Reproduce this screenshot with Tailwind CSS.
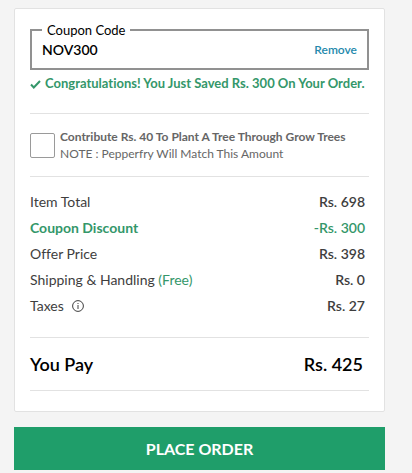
<!DOCTYPE html>
<html lang="en">
<head>
    <meta charset="UTF-8">
    <meta name="viewport" content="width=device-width, initial-scale=1.0">
    <title>Order Summary</title>
    <script src="https://cdn.jsdelivr.net/npm/@tailwindcss/browser@4"></script>
</head>
<body class="bg-[#f4f4f4] font-['Lato',sans-serif] text-[#3e3e3e] [font-variant-ligatures:none]">

    <main class="pl-[14px] pr-[27px] pt-2 pb-[3px]">
        <section class="bg-white border border-[#e2e2e2] rounded-xs px-[15px] pt-[11px] pb-5">
            <!-- Coupon -->
            <fieldset class="border-2 border-[#919191] px-[10px] pb-2">
                <legend class="px-[5px] text-[13px] leading-5 text-black"><label for="coupon">Coupon Code</label></legend>
                <div class="flex items-center justify-between h-5">
                    <input id="coupon" type="text" value="NOV300" class="min-w-0 flex-1 h-5 text-sm font-semibold text-black outline-none">
                    <button type="button" class="text-xs font-semibold text-[#2489ac]">Remove</button>
                </div>
            </fieldset>
            <p class="flex items-center gap-1 mt-1 h-5 text-[13px] font-bold whitespace-nowrap text-[#34976a]">
                <svg class="w-[11px] h-[11px] shrink-0" viewBox="0 0 11 11" fill="none" stroke="currentColor" stroke-width="2"><path d="M1 5.5 3.8 8.5 10 2"/></svg>
                Congratulations! You Just Saved Rs. 300 On Your Order.
            </p>

            <!-- Donation -->
            <div class="flex items-center gap-[5px] mt-[19px] h-16 border-y border-[#e2e2e2]">
                <input id="donate" type="checkbox" class="appearance-none size-[25px] shrink-0 border border-[#9a9a9a] rounded-xs bg-white checked:bg-[#1f9e6a]">
                <label for="donate" class="text-xs leading-[17px] whitespace-nowrap text-[#666666]">
                    <span class="block font-bold">Contribute Rs. 40 To Plant A Tree Through Grow Trees</span>
                    <span class="block">NOTE : Pepperfry Will Match This Amount</span>
                </label>
            </div>

            <!-- Price breakup -->
            <dl class="pt-3 pb-[18px] pr-1 text-sm leading-[26px]">
                <div class="flex justify-between">
                    <dt>Item Total</dt>
                    <dd class="font-semibold">Rs. 698</dd>
                </div>
                <div class="flex justify-between text-[#34976a]">
                    <dt class="font-bold">Coupon Discount</dt>
                    <dd class="font-semibold">-Rs. 300</dd>
                </div>
                <div class="flex justify-between">
                    <dt>Offer Price</dt>
                    <dd class="font-semibold">Rs. 398</dd>
                </div>
                <div class="flex justify-between">
                    <dt>Shipping &amp; Handling <span class="text-[#34976a]">(Free)</span></dt>
                    <dd class="font-semibold">Rs. 0</dd>
                </div>
                <div class="flex justify-between">
                    <dt class="flex items-center gap-2">
                        Taxes
                        <button type="button" aria-label="Tax details">
                            <svg class="block size-3" viewBox="0 0 12 12" fill="none" stroke="currentColor"><circle cx="6" cy="6" r="5.4"/><path d="M6 5v4M6 3v1"/></svg>
                        </button>
                    </dt>
                    <dd class="font-semibold">Rs. 27</dd>
                </div>
            </dl>

            <div class="flex items-center justify-between pr-[6px] h-[54px] border-y border-[#e2e2e2] text-lg font-semibold text-black">
                <span>You Pay</span>
                <span>Rs. 425</span>
            </div>
        </section>

        <button type="button" class="block w-full mt-[15px] h-[43px] bg-[#1f9e6a] text-base font-bold text-white">PLACE ORDER</button>
    </main>

</body>
</html>
